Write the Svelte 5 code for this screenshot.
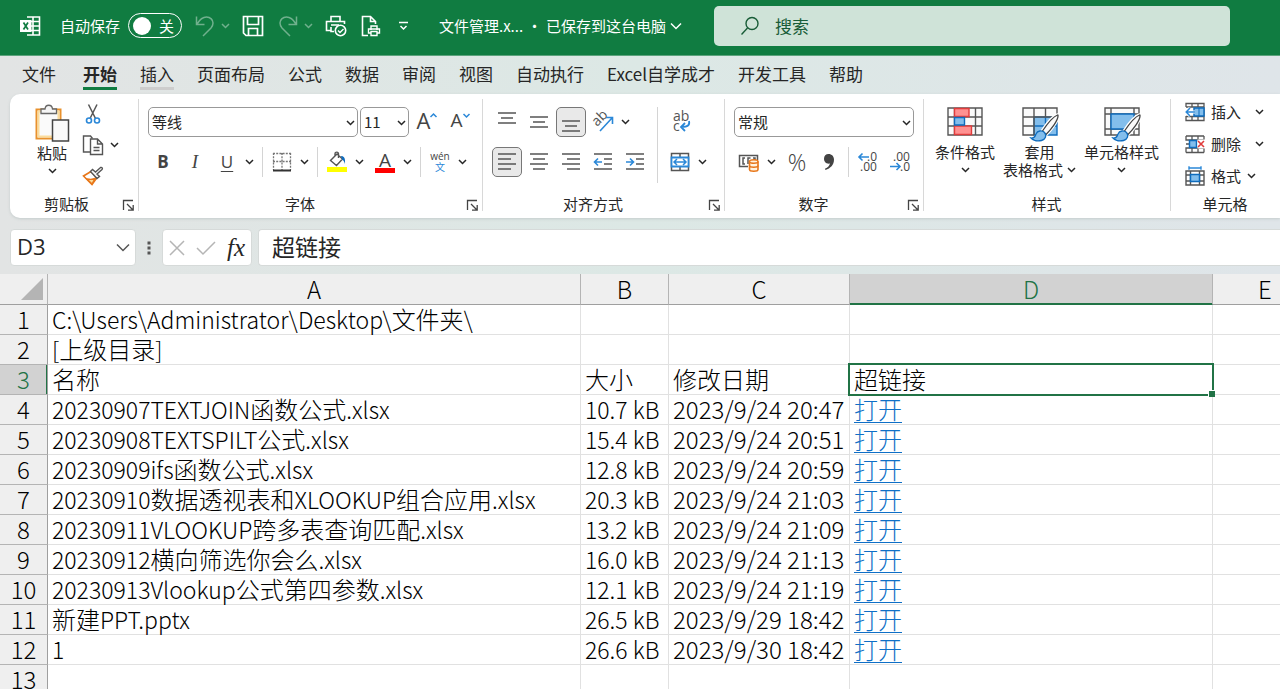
<script lang="ts">
type FileRow = { name: string; size: string; date: string; link: string };

const tabs: string[] = ["文件", "开始", "插入", "页面布局", "公式", "数据", "审阅", "视图", "自动执行", "Excel自学成才", "开发工具", "帮助"];
const columns: string[] = ["A", "B", "C", "D", "E"];

const rows: FileRow[] = [
    { name: "C:\\Users\\Administrator\\Desktop\\文件夹\\", size: "", date: "", link: "" },
    { name: "[上级目录]", size: "", date: "", link: "" },
    { name: "名称", size: "大小", date: "修改日期", link: "超链接" },
    { name: "20230907TEXTJOIN函数公式.xlsx", size: "10.7 kB", date: "2023/9/24 20:47", link: "打开" },
    { name: "20230908TEXTSPILT公式.xlsx", size: "15.4 kB", date: "2023/9/24 20:51", link: "打开" },
    { name: "20230909ifs函数公式.xlsx", size: "12.8 kB", date: "2023/9/24 20:59", link: "打开" },
    { name: "20230910数据透视表和XLOOKUP组合应用.xlsx", size: "20.3 kB", date: "2023/9/24 21:03", link: "打开" },
    { name: "20230911VLOOKUP跨多表查询匹配.xlsx", size: "13.2 kB", date: "2023/9/24 21:09", link: "打开" },
    { name: "20230912横向筛选你会么.xlsx", size: "16.0 kB", date: "2023/9/24 21:13", link: "打开" },
    { name: "20230913Vlookup公式第四参数.xlsx", size: "12.1 kB", date: "2023/9/24 21:19", link: "打开" },
    { name: "新建PPT.pptx", size: "26.5 kB", date: "2023/9/29 18:42", link: "打开" },
    { name: "1", size: "26.6 kB", date: "2023/9/30 18:42", link: "打开" },
    { name: "", size: "", date: "", link: "" }
];

let activeTab: string = $state("开始");
let autoSave: boolean = $state(false);
let search: string = $state("");
let cellName: string = $state("D3");
let formula: string = $state("超链接");

// odd parts are the Chinese runs, even parts the Latin ones
let splitScripts = (text: string) => text.split(/([\u4e00-\u9fff]+)/);
</script>

{#snippet chevron()}
    <svg class="chevron" width="9" height="6" viewBox="0 0 9 6"><path d="M1 1l3.5 3.5L8 1" /></svg>
{/snippet}

{#snippet more(label: string)}
    <button class="more" aria-label={label}>{@render chevron()}</button>
{/snippet}

{#snippet launcher(label: string)}
    <button class="launcher" aria-label={label}>
        <svg width="11" height="11" viewBox="0 0 11 11"><path d="M.5 10V.5H10M4 4l6 6M10.200 5v5.200H5" /></svg>
    </button>
{/snippet}

{#snippet lines(list: number[][])}
    <svg class="line-icon" width="20" height="20" viewBox="0 0 20 20">
        {#each list as [x, y, w]}
            <path d="M{x} {y}h{w}" />
        {/each}
    </svg>
{/snippet}

{#snippet brush()}
    <path d="M36 10c-5 2-11 10-15 16l4 4c5-5 12-14 12-19 0-1-.5-1.300-1-1z" fill="#fff" stroke="#fff" stroke-width="3" />
    <path d="M36.500 10c-5 2-11 10-15 16l3.500 3.500c5-5 12-14 12-18.500 0-1 0-1.200-.5-1z" fill="#fafafa" stroke="#444" stroke-width="1.300" />
    <path d="M10 33c4 .5 4-2 5-4 1.500-3.500 6-4 8.500-1.500 2.500 3 1 7-3 8-4 1-8 0-10.500-2.500z" fill="#83beec" stroke="#0f6cbd" stroke-width="1.300" />
{/snippet}

{#snippet mixed(text: string)}
    {#each splitScripts(text) as part, index}{#if index % 2}{part}{:else if part}<span class="latin">{part}</span>{/if}{/each}
{/snippet}

<div class="app">
    <header class="title-bar">
        <svg class="logo" width="22" height="22" viewBox="0 0 22 22">
            <path d="M8 2h12.500v18H8M14 2v18M8 6.500h12.500M8 11h12.500M8 15.500h12.500" fill="none" stroke="#fff" stroke-width="1.600" />
            <path d="M1 5h11.500v12H1z" fill="#fff" />
            <path d="M4.500 7.500l4.500 7M9 7.500l-4.500 7" stroke="#107c41" stroke-width="1.700" />
        </svg>
        <label class="auto-save">
            <span>自动保存</span>
            <input type="checkbox" bind:checked={autoSave} />
            <span class="toggle"><span class="knob"></span>{autoSave ? "开" : "关"}</span>
        </label>
        <div class="quick">
            <button class="dim" aria-label="撤消">
                <svg width="20" height="22" viewBox="0 0 20 22"><path d="M1.500 1.500v8h8M2 9C5 4 8 2 11.500 2c4 0 6.500 3 6.500 6 0 2-.7 3.500-2 5l-8 8" /></svg>
            </button>
            <button class="dim small" aria-label="撤消列表">{@render chevron()}</button>
            <button aria-label="保存">
                <svg width="22" height="22" viewBox="0 0 22 22"><path d="M1.500 1.500h19v19H4l-2.500-2.500zM5.500 1.500v8h11v-8M6.500 20.500v-7h9v7" stroke-width="1.700" /></svg>
            </button>
            <button class="dim" aria-label="恢复">
                <svg width="20" height="22" viewBox="0 0 20 22"><path d="M18.500 1.500v8h-8M18 9c-3-5-6-7-9.500-7C4.500 2 2 5 2 8c0 2 .7 3.500 2 5l8 8" /></svg>
            </button>
            <button class="dim small" aria-label="恢复列表">{@render chevron()}</button>
            <button aria-label="快速打印">
                <svg width="22" height="22" viewBox="0 0 22 22"><path d="M6 6.500V1.500h9v5M9 16.500H6V12M6 15.500H1.500v-9h18V9M14 10H6" stroke-width="1.600" /><circle cx="15.500" cy="15.500" r="5.200" stroke-width="1.600" /><path d="M13 15.500l2 2 3.500-3.500" stroke-width="1.400" /></svg>
            </button>
            <button class="page" aria-label="打印预览">
                <svg width="20" height="22" viewBox="0 0 20 22"><path d="M7 20.500H1.500v-19h8l5 5V9M9.500 1.500v5h5" stroke-width="1.600" /><path d="M10 15v-4h6v4M10 18H7.500v-4h11v4H16M10 16.500h6v4h-6z" stroke-width="1.400" /></svg>
            </button>
            <button class="small" aria-label="自定义快速访问工具栏">
                <svg width="11" height="10" viewBox="0 0 11 10"><path d="M1 1.500h9M2.500 5l3 3 3-3" /></svg>
            </button>
        </div>
        <button class="doc-name">文件管理.x... <span>•</span> 已保存到这台电脑
            <svg width="12" height="8" viewBox="0 0 12 8"><path d="M1 1.500l5 5 5-5" /></svg>
        </button>
        <label class="search">
            <svg width="20" height="20" viewBox="0 0 20 20"><circle cx="12" cy="7.500" r="6" /><path d="M7.500 12L1.500 18.500" /></svg>
            <input type="text" placeholder="搜索" aria-label="搜索" bind:value={search} />
        </label>
    </header>

    <nav class="tabs">
        {#each tabs as tab (tab)}
            <button class:active={tab === activeTab} class:hovered={tab === "插入"} onclick={() => (activeTab = tab)}>{tab}</button>
        {/each}
    </nav>

    <div class="ribbon">
        <section class="group clipboard">
            <div class="tools">
                <button class="big paste">
                    <svg width="36" height="38" viewBox="0 0 36 38">
                        <path d="M2.500 5.500h24v29h-24z" fill="#fafafa" stroke="#e8912d" stroke-width="2" />
                        <path d="M4.500 7.500h20v25h-20z" fill="none" stroke="#fbdc9b" stroke-width="2" />
                        <path d="M7 9.500V5h4c.5-5 7-5 7.500 0h4v4.500z" fill="#f5f5f5" stroke="#666" stroke-width="1.300" />
                        <path d="M18.500 16h16v21h-16z" fill="#fafafa" stroke="#444" stroke-width="1.500" />
                    </svg>
                    <span>粘贴</span>
                    {@render chevron()}
                </button>
                <div class="stack">
                    <button aria-label="剪切">
                        <svg width="20" height="22" viewBox="0 0 20 22" fill="none"><path d="M5.500 1.500l7 14M14 1.500l-7 14" stroke="#555" stroke-width="1.500" /><circle cx="6" cy="17.500" r="2.500" stroke="#2b88d8" stroke-width="1.600" /><circle cx="14" cy="17.500" r="2.500" stroke="#2b88d8" stroke-width="1.600" /></svg>
                    </button>
                    <div class="row">
                        <button aria-label="复制">
                            <svg width="22" height="22" viewBox="0 0 22 22" fill="none" stroke="#555" stroke-width="1.400"><path d="M8 18H1.500V2h7l2 2.500" /><path d="M8.500 5h7l5 5v10.500h-12zM15.500 5v5h5M11.500 13.500h6M11.500 16.500h6" /></svg>
                        </button>
                        {@render more("复制选项")}
                    </div>
                    <button aria-label="格式刷">
                        <svg width="22" height="22" viewBox="0 0 22 22" fill="none" stroke-width="1.400"><path d="M9 6.500L1.500 11l8.500 8.500 5-7z" fill="#fff" stroke="#e8771a" stroke-width="1.600" /><path d="M5 14c3 .5 6 .5 8-.5l-3 5.500z" fill="#fbdc9b" stroke="#e8771a" /><path d="M8.500 6.500l2-2 3 2.500 5-4.500c1.500-.5 2.500.8 1.500 2l-5 4.500 2.500 2.500-2.500 2z" fill="#fafafa" stroke="#555" /></svg>
                    </button>
                </div>
            </div>
            <footer><h2>剪贴板</h2>{@render launcher("剪贴板设置")}</footer>
        </section>

        <section class="group font">
            <div class="tools column">
                <div class="row">
                    <span class="combo family">
                        <select aria-label="字体"><option>等线</option></select>{@render chevron()}
                    </span>
                    <span class="combo size">
                        <select aria-label="字号"><option>11</option></select>{@render chevron()}
                    </span>
                    <button class="tool grow" aria-label="增大字号">A<svg width="7" height="5" viewBox="0 0 7 5"><path d="M.5 4l3-3 3 3" /></svg></button>
                    <button class="tool shrink" aria-label="减小字号">A<svg width="7" height="5" viewBox="0 0 7 5"><path d="M.5 1l3 3 3-3" /></svg></button>
                </div>
                <div class="row">
                    <button class="tool bold">B</button>
                    <button class="tool italic">I</button>
                    <button class="tool underline">U</button>
                    {@render more("下划线选项")}
                    <i class="bar"></i>
                    <button class="tool" aria-label="边框">
                        <svg width="20" height="20" viewBox="0 0 20 20" fill="none" stroke="#777"><path d="M1.500 1v17M18.500 1v17M10 1v17M1 1.500h18M1 9.500h18" stroke-width="1.300" stroke-dasharray="2 1.200" /><path d="M1 18.500h18" stroke="#333" stroke-width="1.800" /></svg>
                    </button>
                    {@render more("边框选项")}
                    <i class="bar"></i>
                    <button class="tool" aria-label="填充颜色">
                        <svg width="20" height="22" viewBox="0 0 20 22" fill="none"><path d="M10 3L3.500 9.500l6 5 6-6.500zM8 4.500V3c0-2.500 3.500-2.500 3.500 0v4" stroke="#555" stroke-width="1.400" /><path d="M14 5c3 0 4.500 2 4 8-1-3-2-4-3-4.500z" fill="#0f6cbd" /><path d="M0 16h20v5H0z" fill="#ff0" /></svg>
                    </button>
                    {@render more("填充颜色选项")}
                    <button class="tool color" aria-label="字体颜色">A</button>
                    {@render more("字体颜色选项")}
                    <i class="bar"></i>
                    <button class="tool pinyin"><span>wén</span><span class="blue">文</span></button>
                    {@render more("拼音选项")}
                </div>
            </div>
            <footer><h2>字体</h2>{@render launcher("字体设置")}</footer>
        </section>

        <section class="group align">
            <div class="tools">
                <div class="column">
                    <div class="row">
                        <button class="tool" aria-label="顶端对齐">{@render lines([[1, 1, 18], [4, 6, 12], [1, 11, 18]])}</button>
                        <button class="tool" aria-label="垂直居中">{@render lines([[1, 5, 18], [4, 10, 12], [1, 15, 18]])}</button>
                        <button class="tool pressed" aria-label="底端对齐">{@render lines([[1, 9, 18], [4, 14, 12], [1, 19, 18]])}</button>
                        <button class="tool" aria-label="方向">
                            <svg width="22" height="22" viewBox="0 0 22 22"><text transform="translate(5 16) rotate(-45)" font-size="14" fill="#555">ab</text><path d="M8 20L20 7M14 6.500h6.500V13" fill="none" stroke="#2b88d8" stroke-width="1.600" /></svg>
                        </button>
                        {@render more("方向选项")}
                    </div>
                    <div class="row">
                        <button class="tool pressed" aria-label="左对齐">{@render lines([[1, 2, 18], [1, 7, 13], [1, 12, 18], [1, 17, 13]])}</button>
                        <button class="tool" aria-label="居中">{@render lines([[1, 2, 18], [4, 7, 12], [1, 12, 18], [4, 17, 12]])}</button>
                        <button class="tool" aria-label="右对齐">{@render lines([[1, 2, 18], [6, 7, 13], [1, 12, 18], [6, 17, 13]])}</button>
                        <button class="tool" aria-label="减少缩进量">
                            <svg class="line-icon" width="20" height="20" viewBox="0 0 20 20"><path d="M1 2h18M11 7h8M11 12h8M1 17h18" /><path class="arrow" d="M9 10H2M5 6.500L1.500 10 5 13.500" /></svg>
                        </button>
                        <button class="tool" aria-label="增加缩进量">
                            <svg class="line-icon" width="20" height="20" viewBox="0 0 20 20"><path d="M1 2h18M11 7h8M11 12h8M1 17h18" /><path class="arrow" d="M1 10h7M5 6.500L8.500 10 5 13.500" /></svg>
                        </button>
                    </div>
                </div>
                <i class="bar tall"></i>
                <div class="column">
                    <div class="row">
                        <button class="tool" aria-label="自动换行">
                            <svg width="22" height="22" viewBox="0 0 22 22"><text x="4" y="10" font-size="14" fill="#555">ab</text><text x="4" y="20" font-size="14" fill="#555">c</text><path d="M20 10c1 4-1 6-7.500 6M16 12l-4 4 4 4" fill="none" stroke="#2b88d8" stroke-width="1.800" /></svg>
                        </button>
                    </div>
                    <div class="row">
                        <button class="tool" aria-label="合并后居中">
                            <svg width="20" height="20" viewBox="0 0 20 20" fill="none"><path d="M1.500 1.500h17v17h-17zM10 1.500v17" stroke="#555" stroke-width="1.500" /><path d="M1.500 5.500h17v9h-17z" fill="#fff" stroke="#2b88d8" stroke-width="1.800" /><path d="M4 10h12M7 7l-3 3 3 3M13 7l3 3-3 3" stroke="#2b88d8" stroke-width="1.500" /></svg>
                        </button>
                        {@render more("合并选项")}
                    </div>
                </div>
            </div>
            <footer><h2>对齐方式</h2>{@render launcher("对齐设置")}</footer>
        </section>

        <section class="group number">
            <div class="tools column">
                <div class="row">
                    <span class="combo format">
                        <select aria-label="数字格式"><option>常规</option></select>{@render chevron()}
                    </span>
                </div>
                <div class="row">
                    <button class="tool" aria-label="会计数字格式">
                        <svg width="22" height="20" viewBox="0 0 22 20" fill="none"><path d="M10 14.500H1.500v-11h18V8M7 6H5v6h2M12.500 6H10v6M15 6h2v2" stroke="#555" stroke-width="1.500" /><path d="M11.500 9.500v8c0 2.300 8.500 2.300 8.500 0v-8" fill="#fff3e0" stroke="#e8771a" stroke-width="1.600" /><ellipse cx="15.750" cy="9.500" rx="4.250" ry="1.700" fill="#fff3e0" stroke="#e8771a" stroke-width="1.600" /><path d="M11.500 13.500c0 2.300 8.500 2.300 8.500 0" stroke="#e8771a" stroke-width="1.600" /></svg>
                    </button>
                    {@render more("会计格式选项")}
                    <button class="tool percent">%</button>
                    <button class="tool" aria-label="千位分隔样式">
                        <svg width="12" height="18" viewBox="0 0 12 18"><path d="M5.500 1C8.800 1 11 3.400 11 6.800c0 5-3.500 8.600-8.500 10.200l-.6-1.300c3-1.300 4.700-3 5-5.200C3.600 11.200 1 9 1 5.700 1 3 2.900 1 5.500 1z" fill="#444" /></svg>
                    </button>
                    <i class="bar"></i>
                    <button class="tool" aria-label="增加小数位数">
                        <svg width="22" height="22" viewBox="0 0 22 22"><text x="10" y="10" font-size="12" fill="#444">.0</text><text x="3" y="20" font-size="12" fill="#444">.00</text><path d="M12 6H2M5.500 2.500L2 6l3.500 3.500" fill="none" stroke="#2b88d8" stroke-width="1.600" /></svg>
                    </button>
                    <button class="tool" aria-label="减少小数位数">
                        <svg width="22" height="22" viewBox="0 0 22 22"><text x="4" y="10" font-size="12" fill="#444">.00</text><text x="11" y="20" font-size="12" fill="#444">.0</text><path d="M1 15.500h10M7.500 12l3.500 3.500L7.500 19" fill="none" stroke="#2b88d8" stroke-width="1.600" /></svg>
                    </button>
                </div>
            </div>
            <footer><h2>数字</h2>{@render launcher("数字设置")}</footer>
        </section>

        <section class="group styles">
            <div class="tools">
                <button class="big">
                    <svg width="38" height="38" viewBox="0 0 38 38" fill="none"><path d="M2 3h34v27H2zM2 12h34M2 21h34M8.500 3v27M29.500 3v27" fill="#fafafa" stroke="#555" stroke-width="1.400" /><path d="M8.500 3.500H23v8H8.500zM8.500 21h17v8.500h-17z" fill="#ff9191" stroke="#e03c3c" stroke-width="1.400" /><path d="M8.500 12.500h10v7.500h-10z" fill="#83beec" stroke="#0f6cbd" stroke-width="1.400" /></svg>
                    <span>条件格式</span>
                    {@render chevron()}
                </button>
                <button class="big">
                    <svg width="38" height="38" viewBox="0 0 38 38" fill="none"><path d="M2 3h34v27H2z" fill="#fafafa" /><path d="M13 12h23v18H13z" fill="#83beec" stroke="#0f6cbd" stroke-width="1.400" /><path d="M24.500 12v18M13 21h23" stroke="#0f6cbd" stroke-width="1.400" /><path d="M13 30H2V3h34v9M2 12h34M2 21h11M13 3v27M24.500 3v9" stroke="#555" stroke-width="1.400" />{@render brush()}</svg>
                    <span>套用</span>
                    <span>表格格式 {@render chevron()}</span>
                </button>
                <button class="big">
                    <svg width="38" height="38" viewBox="0 0 38 38" fill="none"><path d="M2 3h34v27H2zM2 9h34M2 24h34M8 3v27M31 3v27" fill="#fafafa" stroke="#555" stroke-width="1.400" /><path d="M8 9h23v15H8z" fill="#83beec" stroke="#0f6cbd" stroke-width="1.400" />{@render brush()}</svg>
                    <span>单元格样式</span>
                    {@render chevron()}
                </button>
            </div>
            <footer><h2>样式</h2></footer>
        </section>

        <section class="group cells">
            <div class="tools">
                <button>
                    <svg width="20" height="20" viewBox="0 0 20 20" fill="none"><path d="M1 5V1.500h18v17H1V14M1 5h18M1 14.500h18M7 1.500V5M13 1.500V5M7 14.500v4M13 14.500v4" stroke="#555" stroke-width="1.300" /><path d="M9 6h10v8H9z" fill="#83beec" stroke="#0f6cbd" stroke-width="1.500" /><path d="M14 6v8" stroke="#0f6cbd" /><path d="M10 10H1.500M5 6L1.200 10 5 14" stroke="#fff" stroke-width="3" /><path d="M10 10H1.500M5 6L1.200 10 5 14" stroke="#2b88d8" stroke-width="1.500" /></svg>
                    <span>插入</span>
                    {@render chevron()}
                </button>
                <button>
                    <svg width="20" height="20" viewBox="0 0 20 20" fill="none"><path d="M1 2v4h18V2M1 2h18M7 2v4M13 2v4M1 18.500V14h18v4.500M1 18.500h18M7 14v4.500M13 14v4.500M1 10h4" stroke="#555" stroke-width="1.300" /><path d="M4.500 6.500h7v7h-7z" fill="#83beec" stroke="#0f6cbd" stroke-width="1.500" /><path d="M12.500 5.500H20v9h-7.500z" fill="#fff" /><path d="M13 7l6 6M19 7l-6 6" stroke="#e03c3c" stroke-width="1.600" /></svg>
                    <span>删除</span>
                    {@render chevron()}
                </button>
                <button class="near">
                    <svg width="20" height="20" viewBox="0 0 20 20" fill="none"><path d="M1 5h18v14H1zM1 9h18M1 15h18M5.500 5v14M14.500 5v14" stroke="#555" stroke-width="1.400" /><path d="M5.500 8.500h9v7h-9z" fill="#83beec" stroke="#0f6cbd" stroke-width="1.500" /><path d="M4 2h12M4 .2v3.600M16 .2v3.600" stroke="#2b88d8" stroke-width="1.400" /></svg>
                    <span>格式</span>
                    {@render chevron()}
                </button>
            </div>
            <footer><h2>单元格</h2></footer>
        </section>
    </div>

    <div class="formula-bar">
        <div class="box name-box">
            <input type="text" aria-label="名称框" bind:value={cellName} />
            <button aria-label="名称列表"><svg width="14" height="9" viewBox="0 0 14 9"><path d="M1 1.500l6 6 6-6" /></svg></button>
        </div>
        <svg class="dots" width="4" height="14" viewBox="0 0 4 14"><path d="M.5.500h3v3h-3zM.5 5.500h3v3h-3zM.5 10.500h3v3h-3z" /></svg>
        <div class="box actions">
            <button class="off" aria-label="取消"><svg width="16" height="16" viewBox="0 0 16 16"><path d="M1 1l14 14M15 1L1 15" /></svg></button>
            <button class="off" aria-label="输入"><svg width="20" height="16" viewBox="0 0 20 16"><path d="M1 8l6 6L19 2" /></svg></button>
            <button class="fx" aria-label="插入函数">fx</button>
        </div>
        <input class="box formula" type="text" aria-label="编辑栏" bind:value={formula} />
    </div>

    <div class="sheet">
        <table>
            <colgroup>
                <col class="col-head" /><col class="col-a" /><col class="col-b" /><col class="col-c" /><col class="col-d" /><col />
            </colgroup>
            <thead>
                <tr>
                    <th class="corner" aria-label="全选"><svg width="22" height="22" viewBox="0 0 22 22"><path d="M22 0v22H0z" /></svg></th>
                    {#each columns as column (column)}
                        <th class:current={column === "D"}>{column}</th>
                    {/each}
                </tr>
            </thead>
            <tbody>
                {#each rows as row, index (index)}
                    <tr>
                        <th class:current={index === 2}>{index + 1}</th>
                        <td>{@render mixed(row.name)}</td>
                        <td>{@render mixed(row.size)}</td>
                        <td>{row.date}</td>
                        <td class:selected={index === 2}>
                            {#if row.link === "打开"}
                                <a href="#{index + 1}">{row.link}</a>
                            {:else}
                                {row.link}
                            {/if}
                        </td>
                        <td></td>
                    </tr>
                {/each}
            </tbody>
        </table>
    </div>
</div>

<style>
:global(body) {
    margin: 0;
}

* {
    box-sizing: border-box;
}

.app {
    height: 100vh;
    overflow: hidden;
    display: flex;
    flex-direction: column;
    background: linear-gradient(90deg, #e2e4e4, #dce8e5 50%, #dfe5e9);
    font-family: "Noto Sans CJK SC", sans-serif;
    font-size: 15px;
    line-height: 18px;
    color: #262626;
}

button {
    display: flex;
    align-items: center;
    justify-content: center;
    padding: 0;
    border: none;
    background: none;
    font: inherit;
    color: inherit;
    white-space: nowrap;
}

svg {
    flex: none;
    overflow: visible;
}

input, select {
    font: inherit;
    color: inherit;
    border: none;
    outline: none;
    background: none;
    padding: 0;
    min-width: 0;
}

.chevron {
    fill: none;
    stroke: currentColor;
    stroke-width: 1.5;
}

/* title bar */
.title-bar {
    flex: none;
    height: 56px;
    padding: 0 50px 4px 19px;
    display: flex;
    align-items: center;
    background: #107c41;
    border-bottom: 1px solid #5ba37c;
    color: white;
}

.auto-save {
    display: flex;
    align-items: center;
    gap: 8px;
    margin-left: 19px;
    position: relative;
    white-space: nowrap;
}

.auto-save input {
    position: absolute;
    opacity: 0;
}

.toggle {
    width: 54px;
    height: 25px;
    padding: 0 7px 0 4px;
    display: flex;
    align-items: center;
    justify-content: space-between;
    border: 1px solid white;
    border-radius: 13px;
}

.knob {
    width: 18px;
    height: 18px;
    border-radius: 50%;
    background: white;
}

.quick {
    display: flex;
    align-items: center;
    margin-left: 11px;
}

.quick button {
    width: 24px;
    height: 28px;
}

.quick .small {
    width: 17px;
    margin-right: 7px;
}

.quick button:nth-child(3), .quick button:nth-child(6) {
    margin-right: 11px;
}

.quick .page {
    margin-right: 12px;
}

.quick svg, .doc-name svg {
    fill: none;
    stroke: white;
    stroke-width: 1.5;
}

.quick .dim {
    opacity: 0.4;
}

.doc-name {
    gap: 4px;
    margin-left: 20px;
}

.search {
    flex: 1;
    height: 40px;
    margin-left: 32px;
    padding: 0 26px;
    display: flex;
    align-items: center;
    gap: 15px;
    border-radius: 5px;
    background: #cfe3d8;
    color: #185c37;
    font-size: 17px;
}

.search svg {
    fill: none;
    stroke: #185c37;
    stroke-width: 1.4;
}

.search input {
    flex: 1;
}

.search input::placeholder {
    color: #185c37;
    opacity: 1;
}

/* tabs */
.tabs {
    flex: none;
    height: 38px;
    padding: 0 22px;
    display: flex;
    align-items: flex-start;
    gap: 23px;
    font-size: 17px;
}

.tabs button {
    height: 34px;
    border-bottom: 3px solid transparent;
    padding-top: 4px;
}

.tabs .hovered {
    border-color: #cdcdcd;
}

.tabs .active {
    border-color: #107c41;
    font-weight: bold;
}

.tabs button:nth-child(1) {
    margin-right: 4px;
}

/* ribbon */
.ribbon {
    flex: none;
    height: 124px;
    margin-left: 10px;
    padding: 2px 0 4px;
    display: flex;
    overflow: hidden;
    border-radius: 10px 0 0 10px;
    background: white;
    box-shadow: 0 1px 3px #c4cccc;
}

.group {
    flex: none;
    display: flex;
    flex-direction: column;
    justify-content: space-between;
    background: linear-gradient(#d8d8d8, #d8d8d8) right center / 1px 112px no-repeat;
}

.clipboard {
    width: 129px;
}

.font {
    width: 344px;
}

.align {
    width: 242px;
}

.number {
    width: 199px;
}

.styles {
    width: 247px;
}

.cells {
    width: 110px;
    background: none;
}

.group footer {
    display: flex;
    align-items: center;
    position: relative;
    height: 20px;
}

.group h2 {
    flex: 1;
    margin: 0;
    padding-right: 22px;
    font-size: 15px;
    font-weight: normal;
    text-align: center;
}

.clipboard h2 {
    padding-right: 16px;
}

.styles h2, .cells h2 {
    padding-right: 2px;
}

.launcher {
    position: absolute;
    right: 5px;
    bottom: 3px;
}

.launcher svg {
    fill: none;
    stroke: #444;
    stroke-width: 1.3;
}

.tools {
    display: flex;
    padding: 11px 0 0 8px;
}

.column {
    display: flex;
    flex-direction: column;
    gap: 10px;
}

.row {
    display: flex;
    align-items: center;
}

.tool {
    width: 30px;
    height: 30px;
    margin: 0 1px;
    border-radius: 5px;
    color: #444;
}

.pressed {
    border: 1px solid #777;
    background: #e9e9e9;
}

.more {
    width: 16px;
    height: 30px;
    justify-content: flex-start;
    padding-left: 2px;
}

.bar {
    width: 1px;
    height: 30px;
    margin: 0 3px;
    background: #d4d4d4;
}

.bar.tall {
    height: 76px;
    margin: 0 6px;
}

.line-icon {
    fill: none;
    stroke: #555;
    stroke-width: 1.6;
}

.line-icon .arrow {
    stroke: #2b88d8;
}

.tool text {
    font-family: "Open Sans", sans-serif;
}

.combo {
    position: relative;
    display: flex;
    margin: 0 1px;
}

.combo select {
    width: 100%;
    height: 30px;
    padding: 0 18px 0 3px;
    appearance: none;
    border: 1px solid #999;
    border-radius: 5px;
}

.combo .chevron {
    position: absolute;
    right: 3px;
    top: 13px;
}

.family {
    width: 210px;
}

.size {
    width: 49px;
}

.format {
    width: 180px;
}

.grow, .shrink {
    margin: 0 1px 0 2px;
    align-items: flex-start;
    font-family: "Open Sans", sans-serif;
    font-size: 22px;
    line-height: 26px;
}

.shrink {
    font-size: 19px;
}

.grow svg, .shrink svg {
    margin-top: 6px;
    fill: none;
    stroke: #2b88d8;
    stroke-width: 1.5;
}

.bold, .italic, .underline {
    font-family: "Open Sans", sans-serif;
    font-size: 17px;
}

.bold {
    font-weight: bold;
}

.italic {
    font-family: "Liberation Serif", serif;
    font-style: italic;
    font-size: 19px;
}

.underline {
    text-decoration: underline;
    text-underline-offset: 3px;
}

.color {
    width: 20px;
    height: 22px;
    margin: 0 6px;
    border-bottom: 5px solid red;
    border-radius: 0;
    font-family: "Open Sans", sans-serif;
    font-size: 19px;
}

.pinyin {
    flex-direction: column;
    font-family: "Open Sans", "Noto Sans CJK SC", sans-serif;
    font-size: 10px;
    line-height: 11px;
}

.blue {
    color: #2b88d8;
}

.percent {
    font-family: "Open Sans", sans-serif;
    font-size: 23px;
    font-weight: 300;
}

.big {
    flex-direction: column;
    justify-content: flex-start;
}

.big span {
    display: flex;
    align-items: center;
    gap: 4px;
}

.big > .chevron {
    margin-top: 6px;
}

.clipboard .tools {
    gap: 12px;
    padding: 2px 0 0 24px;
}

.paste {
    padding-top: 6px;
}

.paste span {
    margin-top: 2px;
}

.stack .row, .stack > button {
    height: 31px;
}

.stack button {
    width: 22px;
}

.stack .more {
    padding-left: 6px;
}

.styles .tools {
    gap: 8px;
    padding: 9px 0 0 11px;
}

.cells .tools {
    flex-direction: column;
    padding: 0 0 0 14px;
}

.cells .tools button {
    height: 32px;
    gap: 6px;
    justify-content: flex-start;
}

.cells .tools .chevron {
    margin-left: 8px;
}

.cells .near .chevron {
    margin-left: 0;
}

/* formula bar */
.formula-bar {
    flex: none;
    height: 56px;
    padding: 11px 0 8px 10px;
    display: flex;
    align-items: center;
    font-size: 23px;
}

.box {
    height: 37px;
    display: flex;
    align-items: center;
    border: 1px solid #d6dad9;
    border-radius: 4px;
    background: white;
}

.name-box {
    width: 126px;
    padding: 0 5px 0 6px;
    font-family: "Open Sans", sans-serif;
    font-size: 22px;
}

.name-box input {
    flex: 1;
    padding-bottom: 4px;
}

.name-box svg, .actions svg {
    fill: none;
    stroke: #555;
    stroke-width: 1.5;
}

.dots {
    margin: 0 11px;
    fill: #555;
}

.actions {
    gap: 11px;
    padding: 0 6px;
}

.actions .off svg {
    stroke: #b5b5b5;
}

.fx {
    font-family: "Liberation Serif", serif;
    font-style: italic;
    font-size: 25px;
}

.formula {
    flex: 1;
    margin-left: 6px;
    padding: 0 0 4px 13px;
    border-right: none;
    border-radius: 4px 0 0 4px;
}

/* sheet */
.sheet {
    flex: 1;
    overflow: hidden;
    background: white;
}

table {
    width: 100%;
    min-width: 1318px;
    table-layout: fixed;
    border-collapse: separate;
    border-spacing: 0;
    font-size: 24px;
    line-height: 26px;
    font-weight: 300;
    color: black;
}

.col-head {
    width: 48px;
}

.col-a {
    width: 533px;
}

.col-b {
    width: 88px;
}

.col-c {
    width: 181px;
}

.col-d {
    width: 363px;
}

th {
    height: 30px;
    padding: 0 0 2px;
    background: #efefef;
    border-right: 1px solid #9f9f9f;
    border-bottom: 1px solid #b4b4b4;
    font-weight: 300;
    text-align: center;
}

thead th {
    height: 31px;
    padding: 0;
    border-right-color: #b4b4b4;
    border-bottom-color: #9f9f9f;
}

.corner svg {
    display: block;
    margin-left: 21px;
    fill: #b4b4b4;
}

th.current {
    background: #d2d2d2;
    color: #217346;
}

thead th.current {
    box-shadow: inset 0 -1px #217346;
    border-bottom-color: #217346;
}

tbody th.current {
    box-shadow: inset -1px 0 #217346;
}

td {
    height: 30px;
    padding: 0 0 2px 4px;
    border-right: 1px solid #e1e1e1;
    border-bottom: 1px solid #e1e1e1;
    white-space: nowrap;
}

.latin {
    font-size: 23px;
}

td a {
    color: #0f6fc6;
    text-underline-offset: 3px;
    text-decoration-thickness: 1px;
}

.selected {
    position: relative;
}

.selected::before {
    content: "";
    position: absolute;
    inset: -2px;
    border: 2px solid #217346;
}

.selected::after {
    content: "";
    position: absolute;
    right: -3px;
    bottom: -3px;
    width: 6px;
    height: 6px;
    background: #217346;
    border: solid white;
    border-width: 1px 0 0 1px;
}
</style>
